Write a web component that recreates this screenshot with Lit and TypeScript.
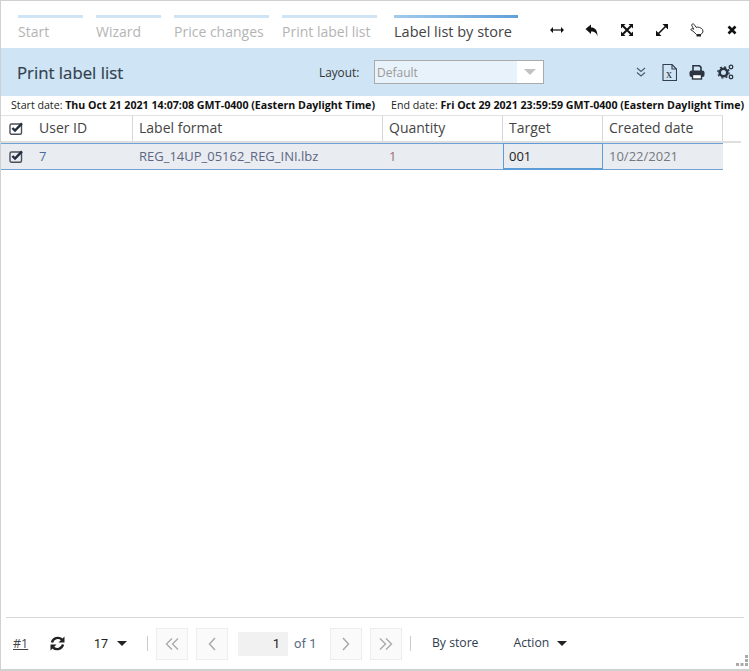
import { LitElement, html, css, svg } from "lit";
import { customElement } from "lit/decorators.js";

const check = html`<svg class="chk" width="14" height="13" viewBox="0 0 14 13"><rect x="1" y="2" width="11.5" height="10.2" rx="1.5" fill="none" stroke="#4a4f57" stroke-width="1.4"/><path d="M3.4 6 L6 8.6 L13 1.4" fill="none" stroke="#1f2d3d" stroke-width="2.4"/></svg>`;

const ic = (w: number, h: number, body: unknown) =>
  html`<svg width=${w} height=${h} viewBox="0 0 ${w} ${h}">${body}</svg>`;

@customElement("app-root")
export class AppRoot extends LitElement {
  static styles = css`
    :host {
      display: block;
      width: 750px;
      height: 671px;
      box-sizing: border-box;
      font-family: "Open Sans", sans-serif;
      color: #333;
    }
    .win {
      box-sizing: border-box;
      width: 750px;
      height: 671px;
      border: 1px solid #d0d0d0;
      border-bottom-width: 2px;
      display: flex;
      flex-direction: column;
      background: #fff;
      position: relative;
    }
    .top {
      height: 47px;
      display: flex;
      padding-top: 14px;
      box-sizing: border-box;
    }
    .tabs {
      display: flex;
      padding-left: 17px;
    }
    .tab {
      margin-right: 13px;
      border-top: 3px solid #cfe5f6;
      height: 30px;
      box-sizing: border-box;
      font-size: 14px;
      line-height: 27px;
      color: #b4b4b4;
      white-space: nowrap;
    }
    .tab.t1, .tab.t2 { width: 65px; }
    .tab.t3, .tab.t4 { width: 95px; }
    .tab.t4 { margin-right: 17px; }
    .tab.on {
      width: 124px;
      margin-right: 0;
      border-top: 3px solid #6ba5da;
      border-image: linear-gradient(90deg, #a3cbec, #5f9fd8) 1;
      color: #444;
      font-size: 14.5px;
    }
    .wins {
      display: flex;
      margin-left: 21px;
      margin-top: 5px;
      height: 20px;
      align-items: center;
    }
    .wins span {
      width: 35px;
      display: flex;
      justify-content: center;
      align-items: center;
    }
    .head {
      height: 48px;
      background: #cfe5f6;
      display: flex;
      align-items: center;
      padding-left: 16px;
      flex: none;
    }
    .title {
      font-size: 16.8px;
      color: #333f4d;
      width: 302px;
      font-weight: 400;
      -webkit-text-stroke: 0.2px #333f4d;
    }
    .layout {
      font-size: 11.8px;
      color: #333;
      width: 55px;
    }
    .sel {
      width: 170px;
      height: 24px;
      box-sizing: border-box;
      border: 1px solid #aaa;
      background: #e8f2fb;
      font-size: 12px;
      color: #9a9a9a;
      line-height: 23px;
      padding-left: 2px;
      position: relative;
    }
    .sel i {
      position: absolute;
      right: 0;
      top: 0;
      width: 26px;
      height: 22px;
      background: #fff;
    }
    .sel i::after {
      content: "";
      position: absolute;
      left: 7px;
      top: 8px;
      border-style: solid;
      border-width: 6px 6px 0;
      border-color: #c2c2c2 transparent transparent;
    }
    .tools {
      display: flex;
      align-items: center;
      margin-left: 92px;
      gap: 12px;
    }
    .xls { margin-left: 4px; display: flex; }
    .dates {
      height: 19px;
      flex: none;
      font-size: 10.65px;
      line-height: 19px;
      color: #222;
      display: flex;
      padding-left: 10px;
      white-space: nowrap;
    }
    .dates b { color: #111; font-weight: 700; }
    .dates .e { margin-left: 16px; }
    .grid {
      display: grid;
      grid-template-columns: 32px 100px 250px 120px 100px 120px;
    }
    .hd {
      height: 26px;
      box-sizing: border-box;
      border-top: 1px solid #e2e2e2;
      border-right: 1px solid #d6d6d6;
      font-size: 14px;
      line-height: 24px;
      padding-left: 6px;
      color: #444;
    }
    .hd.c0, .cell.c0 {
      border-right: none;
      padding-left: 8px;
      display: flex;
      align-items: center;
    }
    .sep {
      grid-column: 1 / -1;
      height: 2px;
      width: 740px;
      background: #dedede;
    }
    .cell {
      height: 27px;
      box-sizing: border-box;
      background: #e9ecf1;
      border-top: 1px solid #6fa3d8;
      border-bottom: 1px solid #6fa3d8;
      font-size: 13px;
      line-height: 25px;
      padding-left: 6px;
      color: #5c6b85;
    }
    .cell.id { color: #4a6d9b; }
    .cell.qty { color: #a0706a; }
    .cell.fmt { color: #5d6783; }
    .cell.tg {
      border: 1.5px solid #5d9cd6;
      border-bottom-width: 2px;
      color: #222;
      padding-left: 5px;
    }
    .cell.dt { color: #74787f; }
    .spacer { flex: 1; }
    .foot {
      flex: none;
      margin: 0 5px;
      height: 52px;
      border-top: 1px solid #d6d6d6;
      display: flex;
      align-items: center;
      padding-left: 7px;
      box-sizing: border-box;
      font-size: 12px;
      color: #333;
      font-family: "Roboto", sans-serif;
    }
    .num { text-decoration: underline; font-family: "Open Sans", sans-serif; font-size: 12.5px; color: #444; width: 37px; }
    .refresh { width: 44px; display: flex; }
    .size { width: 53px; display: flex; align-items: center; font-size: 12.5px; gap: 9px; color: #222; }
    .tri { display: inline-block; border-style: solid; border-width: 5px 5px 0; border-color: #222 transparent transparent; }
    .bar { width: 1px; height: 15px; background: #ccc; }
    .pg {
      width: 32px;
      height: 32px;
      box-sizing: border-box;
      border: 1px solid #ededed;
      background: #fafafa;
      display: flex;
      align-items: center;
      justify-content: center;
      margin-left: 8px;
    }
    .pg.next { margin-left: 0; }
    .pinp {
      width: 50px;
      height: 24px;
      background: #f1f1f1;
      margin-left: 10px;
      text-align: right;
      padding-right: 8px;
      box-sizing: border-box;
      line-height: 24px;
      font-size: 13px;
      color: #222;
    }
    .of { font-size: 13px; color: #5c6b85; margin: 0 14px 0 6px; width: 22px; white-space: nowrap; }
    .btn { font-family: "Open Sans", sans-serif; font-size: 12.2px; color: #2f3d4e; padding-bottom: 2px; }
    .b1 { margin-left: 21px; }
    .b2 { margin-left: 35px; }
    .btri { margin-left: 8px; }
    .bar2 { margin-left: 8px; }
    .grip { position: absolute; right: 0; bottom: 0; }
  `;

  render() {
    return html`<div class="win">
      <div class="top">
        <div class="tabs">
          <div class="tab t1">Start</div>
          <div class="tab t2">Wizard</div>
          <div class="tab t3">Price changes</div>
          <div class="tab t4">Print label list</div>
          <div class="tab on">Label list by store</div>
        </div>
        <div class="wins">
          <span>${ic(14, 8, svg`<path d="M1 4H13" stroke="#111" stroke-width="1.2"/><path d="M0 4L3 1V7ZM14 4L11 1V7Z" fill="#111"/>`)}</span>
          <span>${ic(13, 13, svg`<path d="M0.5 5L6 0.5V3.5C10 3.5 12.5 6 12.5 12.5C11.5 9 10 7.5 6 7.5V10Z" fill="#111"/>`)}</span>
          <span>${ic(12, 12, svg`<path d="M2 2L10 10M10 2L2 10" stroke="#111" stroke-width="2"/><path d="M0 0H4.5L0 4.5ZM12 0V4.5L7.5 0ZM0 12V7.5L4.5 12ZM12 12H7.5L12 7.5Z" fill="#111"/>`)}</span>
          <span>${ic(12, 12, svg`<path d="M2.5 9.5L9.5 2.5" stroke="#111" stroke-width="1.6"/><path d="M6.5 0H12V5.5ZM0 6.5V12H5.5Z" fill="#111"/>`)}</span>
          <span>${ic(14, 14, svg`<path d="M1.5 2C2 .8 3.5 .5 4.2 1.5L6 4.3C8 3.7 11 4.5 12.6 6.5L13 9L11 11.5H6.5L3 8.2L.8 6.8C.8 5.6 2.5 5.2 3.8 6.3Z" fill="#fff" stroke="#333" stroke-width="1"/><path d="M6.5 12.6H11" stroke="#222" stroke-width="1.8"/>`)}</span>
          <span>${ic(10, 10, svg`<path d="M1.5 1.5L8.5 8.5M8.5 1.5L1.5 8.5" stroke="#111" stroke-width="2.6"/>`)}</span>
        </div>
      </div>
      <div class="head">
        <div class="title">Print label list</div>
        <div class="layout">Layout:</div>
        <div class="sel">Default<i></i></div>
        <div class="tools">
          ${ic(10, 11, svg`<path d="M1 1L5 4.5L9 1M1 5.5L5 9L9 5.5" fill="none" stroke="#4a6070" stroke-width="1.2"/>`)}
          <span class="xls">${ic(15, 17, svg`<path d="M1 .5H10L14.5 5V16.5H1Z M10 .5V5H14.5" fill="none" stroke="#333f4d" stroke-width="1.1"/><text x="4" y="14" font-size="12" font-family="Liberation Serif" fill="#333">x</text>`)}</span>
          ${ic(16, 15, svg`<path d="M4 6V.8H10.5L12 2.4V6" fill="none" stroke="#2b3440" stroke-width="1.6"/><rect x=".5" y="5.5" width="15" height="6.5" rx="2" fill="#2b3440"/><rect x="3.5" y="9.5" width="9" height="4.5" fill="#fff" stroke="#2b3440" stroke-width="1.4"/>`)}
          ${ic(17, 16, svg`<circle cx="6.5" cy="8.5" r="3.8" fill="none" stroke="#2b3440" stroke-width="2.6"/><circle cx="6.5" cy="8.5" r="5.6" fill="none" stroke="#2b3440" stroke-width="1.4" stroke-dasharray="2 2.4"/><circle cx="14" cy="3" r="1.8" fill="none" stroke="#2b3440" stroke-width="1.3"/><circle cx="14" cy="13" r="1.8" fill="none" stroke="#2b3440" stroke-width="1.3"/>`)}
        </div>
      </div>
      <div class="dates">
        <span>Start date: <b>Thu Oct 21 2021 14:07:08 GMT-0400 (Eastern Daylight Time)</b></span>
        <span class="e">End date: <b>Fri Oct 29 2021 23:59:59 GMT-0400 (Eastern Daylight Time)</b></span>
      </div>
      <div class="grid">
        <div class="hd c0">${check}</div>
        <div class="hd">User ID</div>
        <div class="hd">Label format</div>
        <div class="hd">Quantity</div>
        <div class="hd">Target</div>
        <div class="hd">Created date</div>
        <div class="sep"></div>
        <div class="cell c0">${check}</div>
        <div class="cell id">7</div>
        <div class="cell fmt">REG_14UP_05162_REG_INI.lbz</div>
        <div class="cell qty">1</div>
        <div class="cell tg">001</div>
        <div class="cell dt">10/22/2021</div>
      </div>
      <div class="spacer"></div>
      <div class="foot">
        <span class="num">#1</span>
        <span class="refresh">${ic(15, 15, svg`<path d="M2 6.5C3 2 8.5 .5 12 3.5" fill="none" stroke="#222" stroke-width="2.4"/><path d="M14.5 0.5V6.5H8.5Z" fill="#222"/><path d="M13 8.5C12 13 6.5 14.5 3 11.5" fill="none" stroke="#222" stroke-width="2.4"/><path d="M.5 14.5V8.5H6.5Z" fill="#222"/>`)}</span>
        <span class="size">17<i class="tri"></i></span>
        <span class="bar"></span>
        <span class="pg">${ic(14, 12, svg`<path d="M7 .5L1.5 6L7 11.5M13 .5L7.5 6L13 11.5" fill="none" stroke="#aaa" stroke-width="1.4"/>`)}</span>
        <span class="pg">${ic(8, 14, svg`<path d="M7 1L1.5 7L7 13" fill="none" stroke="#aaa" stroke-width="1.5"/>`)}</span>
        <span class="pinp">1</span>
        <span class="of">of 1</span>
        <span class="pg next">${ic(8, 14, svg`<path d="M1 1L6.5 7L1 13" fill="none" stroke="#aaa" stroke-width="1.5"/>`)}</span>
        <span class="pg">${ic(14, 12, svg`<path d="M1 .5L6.5 6L1 11.5M7 .5L12.5 6L7 11.5" fill="none" stroke="#aaa" stroke-width="1.4"/>`)}</span>
        <span class="bar bar2"></span>
        <span class="btn b1">By store</span>
        <span class="btn b2">Action</span>
        <i class="tri btri"></i>
      </div>
      <svg class="grip" width="14" height="14" viewBox="0 0 14 14" fill="#aaa">
        <rect x="10" y="0" width="3" height="3"/><rect x="10" y="4" width="3" height="3"/><rect x="10" y="8" width="3" height="3"/>
        <rect x="1" y="8" width="3" height="3"/><rect x="5.5" y="8" width="3" height="3"/>
      </svg>
    </div>`;
  }
}
